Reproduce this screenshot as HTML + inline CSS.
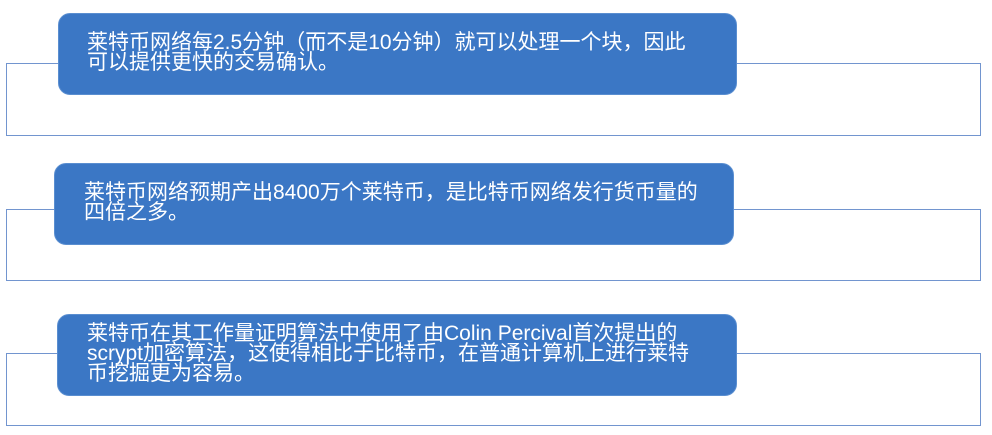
<!DOCTYPE html>
<html><head><meta charset="utf-8"><style>
body{margin:0;width:992px;height:435px;background:#fff;position:relative;overflow:hidden;font-family:"Liberation Sans","Noto Sans CJK SC",sans-serif;}
.o{position:absolute;border:1.5px solid #7295cf;box-sizing:border-box;background:#fff;}
.b{position:absolute;background:#3b77c5;border-radius:12px;color:#fff;font-size:21px;line-height:20px;display:flex;align-items:center;box-sizing:border-box;border:1px solid #5a8ed0;white-space:nowrap;}
.b span{display:block;margin-top:-2px}
</style></head><body>
<div class="o" style="left:6px;top:63px;width:975px;height:73px"></div>
<div class="b" style="left:58px;top:13px;width:679px;height:82px;padding-left:28px"><span>莱特币网络每2.5分钟（而不是10分钟）就可以处理一个块，因此<br>可以提供更快的交易确认。</span></div>
<div class="o" style="left:6px;top:209px;width:975px;height:72px"></div>
<div class="b" style="left:54px;top:163px;width:680px;height:82px;padding-left:29px"><span>莱特币网络预期产出8400万个莱特币，是比特币网络发行货币量的<br>四倍之多。</span></div>
<div class="o" style="left:6px;top:353px;width:975px;height:73px"></div>
<div class="b" style="left:57px;top:314px;width:680px;height:82px;padding-left:29px"><span>莱特币在其工作量证明算法中使用了由Colin Percival首次提出的<br>scrypt加密算法，这使得相比于比特币，在普通计算机上进行莱特<br>币挖掘更为容易。</span></div>
</body></html>
